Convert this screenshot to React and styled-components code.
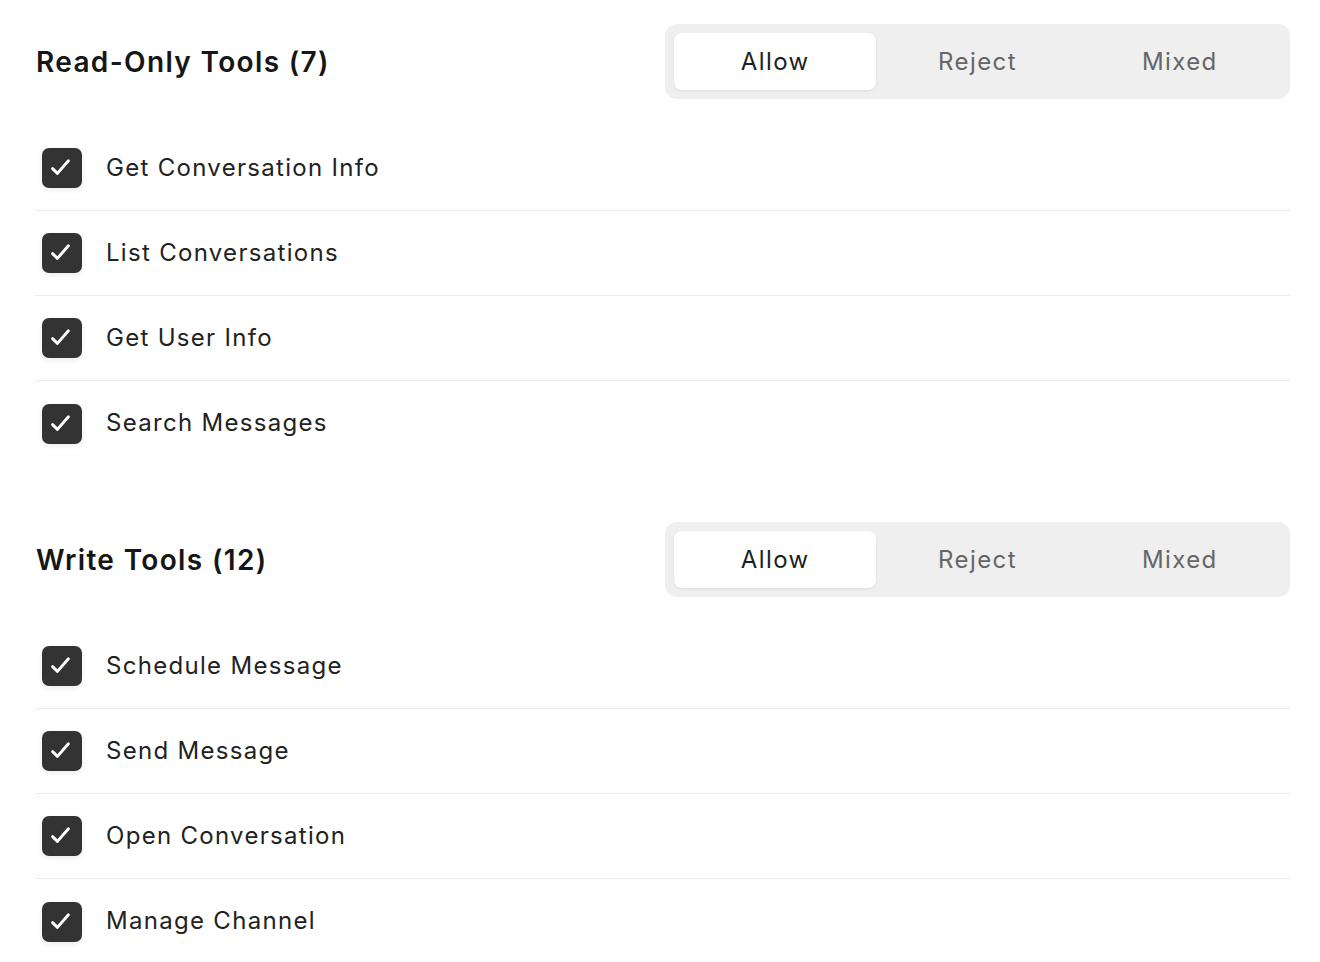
import React, { useState } from "react";
import styled, { createGlobalStyle } from "styled-components";

const Global = createGlobalStyle`
  html, body { margin: 0; padding: 0; background: #ffffff; }
  body { font-family: Inter, "Noto Sans", "Liberation Sans", sans-serif; color: #1f1f1f; -webkit-font-smoothing: antialiased; }
`;

const Page = styled.div`
  padding: 24px 30px 0 35px;
  display: flex;
  flex-direction: column;
  gap: 56px;
`;

const Section = styled.section`
  display: flex;
  flex-direction: column;
  gap: 27px;
`;

const Header = styled.div`
  display: flex;
  align-items: center;
  justify-content: space-between;
`;

const Title = styled.h2`
  margin: 0 0 0 1px;
  font-size: 28px;
  font-weight: 600;
  color: #161616;
  letter-spacing: 1.35px;
`;

const Segmented = styled.div`
  width: 625px;
  height: 75px;
  box-sizing: border-box;
  padding: 9px;
  background: #efefef;
  border-radius: 12px;
  display: grid;
  grid-template-columns: repeat(3, 1fr);
`;

const Segment = styled.button`
  border: none;
  font-family: inherit;
  font-size: 24px;
  font-weight: 400;
  letter-spacing: 1.4px;
  cursor: pointer;
  border-radius: 8px;
  background: ${(p) => (p.$active ? "#ffffff" : "transparent")};
  color: ${(p) => (p.$active ? "#1e1e1e" : "#666666")};
  box-shadow: ${(p) => (p.$active ? "0 1px 3px rgba(0,0,0,0.08)" : "none")};
`;

const List = styled.div`
  display: flex;
  flex-direction: column;
`;

const Row = styled.label`
  height: 85px;
  box-sizing: border-box;
  display: flex;
  align-items: center;
  gap: 24px;
  padding-left: 7px;
  border-bottom: ${(p) => (p.$last ? "none" : "1px solid #ebebeb")};
  cursor: pointer;
`;

const Box = styled.span`
  width: 40px;
  height: 40px;
  border-radius: 7px;
  background: #333333;
  box-shadow: 0 2px 6px rgba(0,0,0,0.08);
  display: flex;
  flex: none;
`;

const Label = styled.span`
  font-size: 24px;
  color: #222222;
  letter-spacing: 1.3px;
  transform: translateY(-1px);
`;

const Check = () => (
  <svg width="40" height="40" viewBox="0 0 40 40" fill="none">
    <path d="M10.6 20.6 L15.4 25.4 L26.4 12.8" stroke="#fff" strokeWidth="2.9" strokeLinecap="round" strokeLinejoin="round" />
  </svg>
);

function ToolSection({ title, items }) {
  const [mode, setMode] = useState("Allow");
  return (
    <Section>
      <Header>
        <Title>{title}</Title>
        <Segmented>
          {["Allow", "Reject", "Mixed"].map((m) => (
            <Segment key={m} $active={mode === m} onClick={() => setMode(m)}>
              {m}
            </Segment>
          ))}
        </Segmented>
      </Header>
      <List>
        {items.map((it, i) => (
          <Row key={it} $last={i === items.length - 1}>
            <Box><Check /></Box>
            <Label>{it}</Label>
          </Row>
        ))}
      </List>
    </Section>
  );
}

export default function App() {
  return (
    <>
      <Global />
      <Page>
        <ToolSection
          title="Read-Only Tools (7)"
          items={["Get Conversation Info", "List Conversations", "Get User Info", "Search Messages"]}
        />
        <ToolSection
          title="Write Tools (12)"
          items={["Schedule Message", "Send Message", "Open Conversation", "Manage Channel"]}
        />
      </Page>
    </>
  );
}
